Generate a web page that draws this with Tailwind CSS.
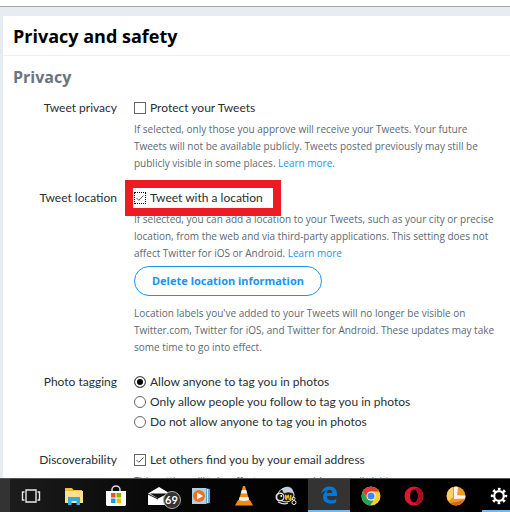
<!DOCTYPE html>
<html lang="en">
<head>
    <meta charset="UTF-8">
    <meta name="viewport" content="width=device-width, initial-scale=1.0">
    <title>Privacy and safety</title>
    <script src="https://cdn.jsdelivr.net/npm/@tailwindcss/browser@4"></script>
</head>
<body class="h-screen flex flex-col overflow-hidden bg-white font-['Lato','Open_Sans',sans-serif] text-[#292f33]">
    <!-- Page -->
    <div class="flex-1 min-h-0 overflow-hidden flex flex-col pt-[6px]">
        <div class="flex-1 min-h-0 bg-[#e6ecf0] border-t border-[#a0aca4] pt-[9px] pl-[3px]">
            <main class="h-full bg-white">
                <header class="h-[40px] px-[10px] flex items-center border-b border-[#edf1f4]">
                    <h1 class="text-[18px] leading-[24px] font-bold text-black font-['Open_Sans',sans-serif]">Privacy and safety</h1>
                </header>
                <form class="pt-[9px] pl-[10px] pr-[10px] text-[12px] leading-[20px]">
                    <h2 class="text-[16px] leading-[24px] font-bold text-[#66757f] mb-[9px] font-['Open_Sans',sans-serif]">Privacy</h2>

                    <!-- Tweet privacy -->
                    <div class="flex gap-[17px] mb-[16px]">
                        <div class="w-[104px] shrink-0 text-right">Tweet privacy</div>
                        <div class="flex-1">
                            <label class="flex items-center gap-1">
                                <input type="checkbox" class="appearance-none size-[12px] border border-[#666] bg-white">
                                Protect your Tweets
                            </label>
                            <p class="pt-[3px] text-[10px] leading-[17px] text-[#5b6a74] font-['Open_Sans',sans-serif]">If selected, only those you approve will receive your Tweets. Your future<br>Tweets will not be available publicly. Tweets posted previously may still be<br>publicly visible in some places. <a href="#" class="text-[#1b95f0]">Learn more</a>.</p>
                        </div>
                    </div>

                    <!-- Tweet location -->
                    <div class="flex gap-[17px] mb-[16px]">
                        <div class="w-[104px] shrink-0 text-right">Tweet location</div>
                        <div class="flex-1">
                            <label class="relative flex items-center gap-1">
                                <input type="checkbox" checked class="appearance-none size-[12px] border border-dotted border-black bg-white">
                                <svg class="absolute left-[2px] top-[6px] size-[8px]" viewBox="0 0 8 8" fill="none" stroke="#555"><path d="M0.5 4l2.3 2.3L7.5 1.5"/></svg>
                                Tweet with a location
                                <span class="absolute -left-[9px] -top-[8px] w-[156px] h-[36px] border-8 border-[#ed1c24]"></span>
                            </label>
                            <p class="pt-[3px] text-[10px] leading-[17px] text-[#5b6a74] font-['Open_Sans',sans-serif]">If selected, you can add a location to your Tweets, such as your city or precise<br>location, from the web and via third-party applications. This setting does not<br>affect Twitter for iOS or Android. <a href="#" class="text-[#1b95f0]">Learn more</a></p>
                            <button type="button" class="block mt-[4px] h-[30px] px-[17px] rounded-full border border-[#1b95f0] text-[11px] font-bold text-[#1b95f0] font-['Noto_Sans',sans-serif]">Delete location information</button>
                            <p class="pt-[9px] text-[10px] leading-[17px] text-[#5b6a74] font-['Open_Sans',sans-serif]">Location labels you've added to your Tweets will no longer be visible on<br>Twitter.com, Twitter for iOS, and Twitter for Android. These updates may take<br>some time to go into effect.</p>
                        </div>
                    </div>

                    <!-- Photo tagging -->
                    <div class="flex gap-[17px] mb-[18px]">
                        <div class="w-[104px] shrink-0 text-right">Photo tagging</div>
                        <div class="flex-1">
                            <label class="flex items-center gap-1"><input type="radio" name="tag" checked class="appearance-none size-[12px] rounded-full border border-[#555] bg-white checked:bg-black checked:shadow-[inset_0_0_0_2px_white]">Allow anyone to tag you in photos</label>
                            <label class="flex items-center gap-1"><input type="radio" name="tag" class="appearance-none size-[12px] rounded-full border border-[#666] bg-white">Only allow people you follow to tag you in photos</label>
                            <label class="flex items-center gap-1"><input type="radio" name="tag" class="appearance-none size-[12px] rounded-full border border-[#666] bg-white">Do not allow anyone to tag you in photos</label>
                        </div>
                    </div>

                    <!-- Discoverability -->
                    <div class="flex gap-[17px]">
                        <div class="w-[104px] shrink-0 text-right">Discoverability</div>
                        <div class="flex-1">
                            <label class="relative flex items-center gap-1">
                                <input type="checkbox" checked class="appearance-none size-[12px] border border-[#666] bg-white">
                                <svg class="absolute left-[2px] top-[6px] size-[8px]" viewBox="0 0 8 8" fill="none" stroke="#555"><path d="M0.5 4l2.3 2.3L7.5 1.5"/></svg>
                                Let others find you by your email address
                            </label>
                            <p class="pt-[3px] text-[10px] leading-[17px] text-[#5b6a74] font-['Open_Sans',sans-serif]">This setting will take effect once you add an email. <a href="#" class="text-[#1b95f0]">Add now</a></p>
                        </div>
                    </div>
                </form>
            </main>
        </div>
    </div>

    <!-- Taskbar -->
    <footer class="relative h-[34px] shrink-0 flex overflow-hidden bg-[#050505] border-t border-[#555]">
        <div class="w-[10px] shrink-0 bg-[#333]"></div>
        <nav class="w-full shrink-0 grid grid-cols-12 bg-linear-to-r from-[#1c1c1c] via-[#070707] via-30% to-black">
            <button type="button" aria-label="Task view" class="grid place-items-center">
                <svg width="20" height="16" viewBox="0 0 20 16" fill="none" stroke="#e8e8e8" stroke-width="1.4"><path d="M5 2h10v12H5zM3.500 4H1.500v8h2M16.500 4h2v8h-2"/></svg>
            </button>
            <button type="button" aria-label="File Explorer" class="grid place-items-center">
                <svg width="20" height="18" viewBox="0 0 20 18"><path fill="#e9b93c" d="M1 1h7l1.500 2H18v5H1z"/><path fill="#fbdf8a" d="M1 4h18v12H1z"/><path fill="#36a9e1" d="M4 10h12v8h-3.500v-4h-5v4H4z"/><path fill="#f6c94e" d="M2 2h5v1H2z"/></svg>
            </button>
            <button type="button" aria-label="Store" class="grid place-items-center">
                <svg width="22" height="22" viewBox="0 0 22 22"><path d="M7 7V4.500a4 3.500 0 0 1 8 0V7" fill="none" stroke="#ddd" stroke-width="1.500"/><path fill="#fff" d="M1 6h20v14l-1 1H2l-1-1z"/><path fill="#f25022" d="M6 8h4.500v4.500H6z"/><path fill="#7fba00" d="M11.500 8H16v4.500h-4.500z"/><path fill="#00a4ef" d="M6 13.500h4.500V18H6z"/><path fill="#ffb900" d="M11.500 13.500H16V18h-4.500z"/></svg>
            </button>
            <button type="button" aria-label="Mail" class="relative grid place-items-center">
                <svg width="22" height="18" viewBox="0 0 22 18"><path fill="#fff" d="M0 6.500L11 0l11 6.500V18H0z"/><path fill="#111" d="M2 6.500h18l-10 5z"/><path stroke="#111" stroke-width="1" d="M0 7l10 5"/></svg>
                <span class="absolute left-[25px] top-[12px] size-[18px] rounded-full bg-[#333] border border-[#aaa] text-center text-[11px] leading-[16px] font-bold text-white">69</span>
            </button>
            <button type="button" aria-label="Media player" class="grid place-items-center">
                <svg width="20" height="18" viewBox="0 0 20 18"><path fill="#5aa9cf" d="M14 1l5 1v14l-5 1z"/><path fill="#a9d5ea" d="M1 1h14v16H1z"/><path fill="#d7edf7" d="M16 2h1v14h-1z"/><circle cx="8" cy="9" r="6" fill="#f0731c"/><path fill="#fff" d="M6 5.500l6 3.500-6 3.500z"/></svg>
            </button>
            <button type="button" aria-label="VLC" class="grid place-items-center">
                <svg width="18" height="20" viewBox="0 0 18 20"><path fill="#f08a12" d="M3 14h12l3 5.500H0z"/><path fill="#f28c14" d="M8 0h2l4.500 15q-5.500 3-11 0z"/><path fill="#eee" d="M6.800 4h4.400l1 3.500H5.800zM4.700 11h8.600l.9 3q-5.200 2-10.400 0z"/></svg>
            </button>
            <button type="button" aria-label="Bee" class="grid place-items-center">
                <svg width="22" height="20" viewBox="0 0 22 20"><ellipse cx="11" cy="9" rx="8" ry="7" fill="#1a1a1a" stroke="#ddd"/><path fill="#c3d0dc" stroke="#eee" stroke-width=".5" d="M7 3Q13-1 17 3l1 4q-5-2-9 0z"/><path fill="#e8b51b" d="M10 8.500l2 1 2-1v6l-1-3-1.500 3L10 13zM15 9h1.500l-.5 5h-2z"/><circle cx="5" cy="11" r="4.500" fill="#ddd"/><circle cx="5.300" cy="11" r="3" fill="#111"/><circle cx="6.300" cy="10" r="1" fill="#fff"/><path d="M3 16q6 3 10 1" fill="none" stroke="#ddd" stroke-width="1.300"/><circle cx="18.500" cy="12.500" r="1.500" fill="none" stroke="#eee"/><circle cx="19" cy="16.500" r="2" fill="none" stroke="#eee"/></svg>
            </button>
            <button type="button" aria-label="Edge" class="grid place-items-center bg-[#333] border-b-2 border-[#76b9ed]">
                <svg width="18" height="18" viewBox="0 0 18 18"><path fill="#0078d7" d="M1 8C2 3 5 .5 9.500 .5c5 0 7.500 3.500 7.500 7.500v2H6.500c.2 3 2.500 4.300 5 4.300 1.800 0 3.300-.5 4.700-1.300v3.400c-1.500.8-3.400 1.200-5.400 1.200-4.600 0-7.800-2.600-7.800-6.800 0-3 1.700-5.400 4.300-6.600C4 4.600 2 6 1 8zm5.600-1h5.700c0-2-1-3.200-2.800-3.200C8 3.800 6.900 5.200 6.600 7z"/></svg>
            </button>
            <button type="button" aria-label="Chrome" class="grid place-items-center">
                <svg width="20" height="20" viewBox="0 0 20 20"><circle cx="10" cy="10" r="9.500" fill="#fc3"/><path fill="#df3c2f" d="M1.800 5.200A9.500 9.500 0 0 1 18.200 5.500H10L6 12.300z"/><path fill="#2ba24c" d="M1.800 5.200L6 12.300 10 14.500h2.500L9.200 19.500A9.500 9.500 0 0 1 1.800 5.200z"/><circle cx="10" cy="10" r="4.500" fill="#fff"/><circle cx="10" cy="10" r="3.600" fill="#4285f4"/></svg>
            </button>
            <button type="button" aria-label="Opera" class="grid place-items-center">
                <svg width="20" height="20" viewBox="0 0 20 20"><path fill="#e5162c" fill-rule="evenodd" d="M10 .5a9.500 9.500 0 1 0 0 19 9.500 9.500 0 0 0 0-19zM10 3.500c2.400 0 4 3 4 6.500s-1.600 6.500-4 6.500S6 13.500 6 10s1.600-6.500 4-6.500z"/><path fill="#a70e1e" d="M10 3.500c2-2.500 5-1.500 6.500 0a9.500 9.500 0 0 1 0 13c-2 1.800-4.800 2-6.500 0 2.400 0 4-3 4-6.500s-1.600-6.500-4-6.500z"/></svg>
            </button>
            <button type="button" aria-label="Clock" class="grid place-items-center">
                <svg width="20" height="20" viewBox="0 0 20 20"><circle cx="10" cy="10" r="9.500" fill="#ee9a20"/><path fill="#f9cf6a" d="M1 8A9.500 9.500 0 0 1 7 1L7 11 3 15Q0 12 1 8z"/><path fill="#d2690c" d="M4 17q8-1 14-3-3 5-8 5.500-3.500 0-6-2.500z"/><path fill="#f6f3f6" d="M8 1q2-1 4 0l-.8 8.200L19.300 9.500v3L8 13z"/></svg>
            </button>
            <button type="button" aria-label="Settings" class="grid place-items-center">
                <svg width="18" height="18" viewBox="0 0 18 18" fill="none" stroke="#fff"><circle cx="9" cy="9" r="4.800" stroke-width="2.200"/><circle cx="9" cy="9" r="6.800" stroke-width="2.800" stroke-dasharray="2.600 2.740" stroke-dashoffset="1.300"/></svg>
            </button>
        </nav>
        <div class="absolute right-0 bottom-0 w-[28px] h-[2px] bg-[#76b9ed]"></div>
    </footer>
</body>
</html>
